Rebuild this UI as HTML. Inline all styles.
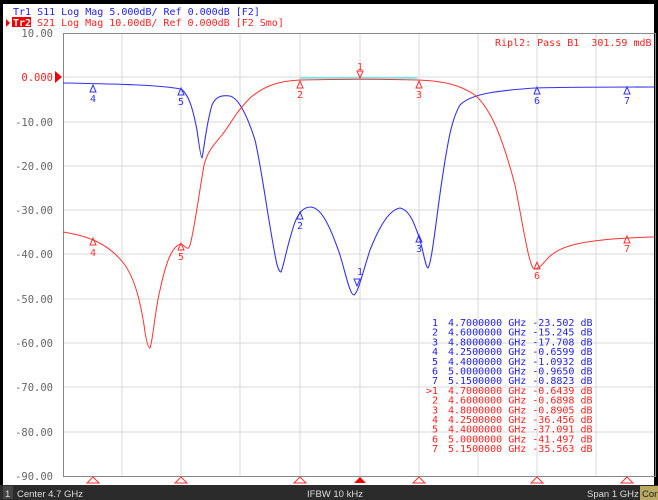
<!DOCTYPE html>
<html><head><style>
body{margin:0;width:658px;height:500px;overflow:hidden;background:#000;font-family:"DejaVu Sans Mono","Liberation Mono",monospace}
</style></head><body>
<svg width="658" height="500" viewBox="0 0 658 500" xmlns="http://www.w3.org/2000/svg" style="position:absolute;left:0;top:0">
<rect x="3" y="4" width="651" height="481" fill="#fff"/>
<rect x="0" y="485" width="658" height="15" fill="#2b2b2b"/>
<g font-family="DejaVu Sans Mono, Liberation Mono, monospace" font-size="10">
<text x="13" y="15" fill="#2222ee">Tr1 S11 Log Mag 5.000dB/ Ref 0.000dB [F2]</text>
<polygon points="6,19 10,23 6,27" fill="#e00"/>
<rect x="12" y="17" width="19" height="10" fill="#e00"/>
<text x="13" y="26" fill="#fff" font-weight="bold">Tr2</text>
<text x="37" y="26" fill="#f22">S21 Log Mag 10.00dB/ Ref 0.000dB [F2 Smo]</text>
</g>
<g stroke="#d8d8d8" stroke-width="1">
<line x1="122" y1="33" x2="122" y2="476"/><line x1="181" y1="33" x2="181" y2="476"/><line x1="240" y1="33" x2="240" y2="476"/><line x1="300" y1="33" x2="300" y2="476"/><line x1="360" y1="33" x2="360" y2="476"/><line x1="419" y1="33" x2="419" y2="476"/><line x1="478" y1="33" x2="478" y2="476"/><line x1="537" y1="33" x2="537" y2="476"/><line x1="596" y1="33" x2="596" y2="476"/>
<line x1="63" y1="77" x2="654" y2="77"/><line x1="63" y1="122" x2="654" y2="122"/><line x1="63" y1="166" x2="654" y2="166"/><line x1="63" y1="210" x2="654" y2="210"/><line x1="63" y1="254" x2="654" y2="254"/><line x1="63" y1="299" x2="654" y2="299"/><line x1="63" y1="343" x2="654" y2="343"/><line x1="63" y1="387" x2="654" y2="387"/><line x1="63" y1="432" x2="654" y2="432"/>
</g>
<rect x="63.5" y="33.5" width="592" height="443" fill="none" stroke="#888"/>
<g font-family="DejaVu Sans Mono, Liberation Mono, monospace" font-size="10.5" fill="#666" text-anchor="end">
<text x="53" y="37">10.00</text><text x="53" y="81" fill="#f22">0.000</text><text x="53" y="126">-10.00</text><text x="53" y="170">-20.00</text><text x="53" y="214">-30.00</text><text x="53" y="258">-40.00</text><text x="53" y="303">-50.00</text><text x="53" y="347">-60.00</text><text x="53" y="391">-70.00</text><text x="53" y="436">-80.00</text><text x="53" y="480">-90.00</text>
</g>
<polygon points="55,71 62,77 55,83" fill="#e00"/>
<line x1="300" y1="78" x2="417" y2="78" stroke="#5ee" stroke-width="1.5"/>
<path d="M63,83 C120,84 160,85 181,89 C190,95 194,115 197,130 C199,145 201,158 202,158 C204,150 206,125 212,105 C216,96 222,95 230,96 C238,98 246,112 255,140 C262,170 268,220 276,260 C278,270 280,272 281,272 C284,265 287,245 295,222 C300,210 305,207 311,207 C320,208 328,220 340,255 C346,275 350,295 354,295 C358,293 362,275 370,250 C378,230 388,210 400,208 C410,210 415,225 420,240 C424,255 426,268 428,268 C432,262 436,220 442,180 C448,140 452,118 460,105 C470,95 490,91 535,88 C570,87 600,87 654,87" fill="none" stroke="#3333ee" stroke-width="1.1"/>
<path d="M63,232 C90,236 110,245 125,265 C135,280 140,300 144,325 C146,340 148,348 150,348 C153,340 155,310 160,290 C166,262 172,246 181,244 C186,246 188,252 190,245 C194,232 198,200 204,165 C208,150 214,145 222,135 C230,125 236,112 250,98 C265,85 280,81 300,80 C340,79 380,79 417,80 C445,81 460,85 475,95 C492,110 503,140 515,185 C522,220 528,260 533,268 C537,271 541,266 548,258 C560,246 580,239 654,237" fill="none" stroke="#f33" stroke-width="1"/>
<g font-family="DejaVu Sans Mono, monospace" font-size="10" text-anchor="middle">
<g fill="none" stroke="#3333ee"><path d="M93,85 l-3,7 h6 z"/><path d="M181,88 l-3,7 h6 z"/><path d="M300,212 l-3,7 h6 z"/><path d="M419,235 l-3,7 h6 z"/><path d="M537,87 l-3,7 h6 z"/><path d="M627,87 l-3,7 h6 z"/><path d="M357,286 l-3,-7 h6 z"/></g>
<g fill="#3333ee"><text x="93" y="102">4</text><text x="181" y="105">5</text><text x="300" y="229">2</text><text x="419" y="252">3</text><text x="537" y="104">6</text><text x="627" y="104">7</text><text x="360" y="275">1</text></g>
<g fill="none" stroke="#f33"><path d="M93,238 l-3,7 h6 z"/><path d="M181,243 l-3,7 h6 z"/><path d="M300,81 l-3,7 h6 z"/><path d="M419,81 l-3,7 h6 z"/><path d="M537,262 l-3,7 h6 z"/><path d="M627,236 l-3,7 h6 z"/><path d="M360,78 l-3,-7 h6 z"/></g>
<g fill="#f33"><text x="93" y="256">4</text><text x="181" y="260">5</text><text x="300" y="98">2</text><text x="419" y="98">3</text><text x="537" y="279">6</text><text x="627" y="252">7</text><text x="360" y="70">1</text></g>
</g>
<text x="495" y="46" font-family="DejaVu Sans Mono, monospace" font-size="10" fill="#f22">Ripl2: Pass B1&#160;&#160;301.59 mdB</text>
<g font-family="DejaVu Sans Mono, Liberation Mono, monospace" font-size="10">
<g fill="#2222ee" text-anchor="end">
<text x="438" y="326">1</text><text x="438" y="335.7">2</text><text x="438" y="345.4">3</text><text x="438" y="355.1">4</text><text x="438" y="364.8">5</text><text x="438" y="374.5">6</text><text x="438" y="384.2">7</text></g>
<g fill="#2222ee">
<text x="448" y="326">4.7000000 GHz -23.502 dB</text>
<text x="448" y="335.7">4.6000000 GHz -15.245 dB</text>
<text x="448" y="345.4">4.8000000 GHz -17.708 dB</text>
<text x="448" y="355.1">4.2500000 GHz -0.6599 dB</text>
<text x="448" y="364.8">4.4000000 GHz -1.0932 dB</text>
<text x="448" y="374.5">5.0000000 GHz -0.9650 dB</text>
<text x="448" y="384.2">5.1500000 GHz -0.8823 dB</text></g>
<g fill="#f22" text-anchor="end">
<text x="438" y="393.9">&gt;1</text><text x="438" y="403.6">2</text><text x="438" y="413.3">3</text><text x="438" y="423">4</text><text x="438" y="432.7">5</text><text x="438" y="442.4">6</text><text x="438" y="452.1">7</text></g>
<g fill="#f22">
<text x="448" y="393.9">4.7000000 GHz -0.6439 dB</text>
<text x="448" y="403.6">4.6000000 GHz -0.6898 dB</text>
<text x="448" y="413.3">4.8000000 GHz -0.8905 dB</text>
<text x="448" y="423">4.2500000 GHz -36.456 dB</text>
<text x="448" y="432.7">4.4000000 GHz -37.091 dB</text>
<text x="448" y="442.4">5.0000000 GHz -41.497 dB</text>
<text x="448" y="452.1">5.1500000 GHz -35.563 dB</text></g>
</g>
<g fill="none" stroke="#f33"><path d="M93,477 l-6,6 h12 z"/><path d="M181,477 l-6,6 h12 z"/><path d="M300,477 l-6,6 h12 z"/><path d="M419,477 l-6,6 h12 z"/><path d="M537,477 l-6,6 h12 z"/><path d="M627,477 l-6,6 h12 z"/></g>
<path d="M360,477 l-6,6 h12 z" fill="#e00"/>
<rect x="3" y="486" width="10" height="13" fill="#444"/>
<g font-family="Liberation Sans, sans-serif" font-size="9.5" fill="#ddd">
<text x="5" y="497">1</text><text x="17" y="497">Center 4.7 GHz</text><text x="307" y="497">IFBW 10 kHz</text><text x="587" y="497">Span 1 GHz</text>
</g>
<rect x="640" y="486" width="18" height="14" fill="#b8a860"/>
<text x="642" y="497" font-family="Liberation Sans, sans-serif" font-size="9.5" fill="#222">Cor</text>
</svg>
</body></html>
